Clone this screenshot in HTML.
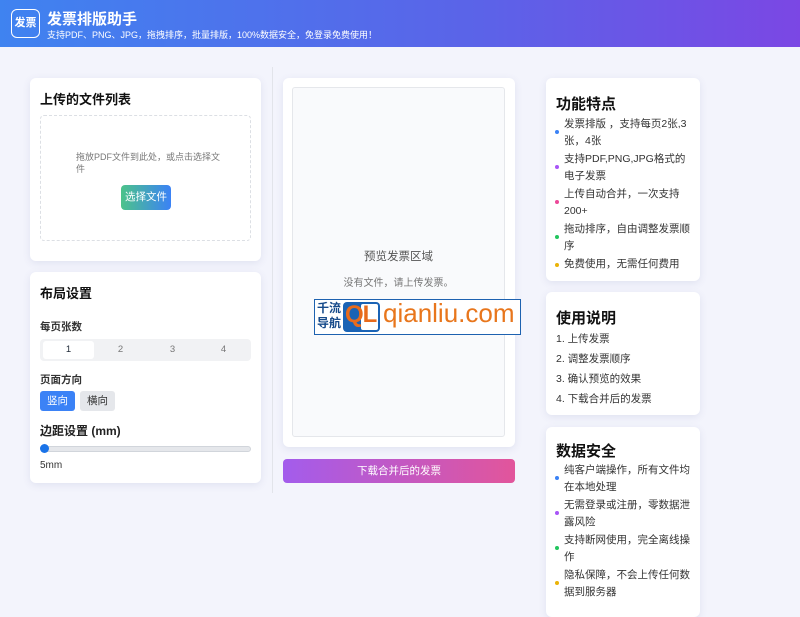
<!DOCTYPE html>
<html><head><meta charset="utf-8"><style>
*{margin:0;padding:0;box-sizing:border-box}
body{width:800px;height:599px;overflow:hidden;background:#f3f4fc;font-family:"Liberation Sans","Noto Sans CJK SC",sans-serif;color:#1f2937;position:relative}
.a{position:absolute}
.hdr{left:0;top:0;width:800px;height:47px;background:linear-gradient(90deg,#3f83f0,#5b63e8 60%,#7b47e4)}
.card{background:#fff;border-radius:6px;box-shadow:0 2px 8px rgba(90,100,160,.12)}
h3{font-size:13px;font-weight:bold;color:#111}
.li{position:absolute;left:18px;font-size:10.5px;line-height:17px;color:#333;width:128px}
.dot{position:absolute;left:-9px;width:4px;height:4px;border-radius:50%}
</style></head><body>
<div class="a hdr"></div>
<div class="a" style="left:11px;top:9px;width:29px;height:29px;border:1.5px solid #fff;border-radius:6px;color:#fff;font-size:11px;font-weight:bold;line-height:26px;text-align:center">发票</div>
<div class="a" style="left:47px;top:8px;color:#fff;font-size:15px;font-weight:bold">发票排版助手</div>
<div class="a" style="left:47px;top:28px;color:#fff;font-size:9px">支持PDF、PNG、JPG，拖拽排序，批量排版，100%数据安全，免登录免费使用！</div>

<div class="a card" style="left:30px;top:78px;width:231px;height:183px"></div>
<h3 class="a" style="left:40px;top:89px">上传的文件列表</h3>
<div class="a" style="left:40px;top:115px;width:211px;height:126px;border:1.5px dashed #dcdfe4;border-radius:4px"></div>
<div class="a" style="left:76px;top:151px;width:150px;font-size:9px;color:#777;line-height:12px">拖放PDF文件到此处，或点击选择文件</div>
<div class="a" style="left:121px;top:185px;width:50px;height:25px;border-radius:4px;background:linear-gradient(90deg,#4cc38a,#3b82f6);color:#fff;font-size:10.5px;line-height:25px;text-align:center">选择文件</div>

<div class="a card" style="left:30px;top:272px;width:231px;height:211px"></div>
<h3 class="a" style="left:40px;top:283px">布局设置</h3>
<div class="a" style="left:40px;top:319px;font-size:10.5px;font-weight:bold;color:#333">每页张数</div>
<div class="a" style="left:40px;top:339px;width:211px;height:22px;background:#f1f2f4;border-radius:4px"></div>
<div class="a" style="left:43px;top:341px;width:51px;height:18px;background:#fff;border-radius:3px"></div>
<div class="a" style="left:43px;top:344px;width:51px;text-align:center;font-size:9.5px">1</div>
<div class="a" style="left:95px;top:344px;width:51px;text-align:center;font-size:9.5px;color:#777">2</div>
<div class="a" style="left:147px;top:344px;width:51px;text-align:center;font-size:9.5px;color:#777">3</div>
<div class="a" style="left:198px;top:344px;width:51px;text-align:center;font-size:9.5px;color:#777">4</div>
<div class="a" style="left:40px;top:372px;font-size:10.5px;font-weight:bold;color:#333">页面方向</div>
<div class="a" style="left:40px;top:391px;width:35px;height:20px;background:#3b82f6;border-radius:3px;color:#fff;font-size:10.5px;line-height:20px;text-align:center">竖向</div>
<div class="a" style="left:80px;top:391px;width:35px;height:20px;background:#e5e7eb;border-radius:3px;color:#333;font-size:10.5px;line-height:20px;text-align:center">横向</div>
<div class="a" style="left:40px;top:422px;font-size:12px;font-weight:bold;color:#222">边距设置 (mm)</div>
<div class="a" style="left:41px;top:446px;width:210px;height:6px;background:#e5e7eb;border:1px solid #d1d5db;border-radius:3px"></div>
<div class="a" style="left:40px;top:444px;width:9px;height:9px;background:#1a73e8;border-radius:50%"></div>
<div class="a" style="left:40px;top:460px;font-size:10px;color:#333">5mm</div>

<div class="a" style="left:272px;top:67px;width:1px;height:426px;background:#e2e4ea"></div>

<div class="a card" style="left:283px;top:78px;width:232px;height:369px"></div>
<div class="a" style="left:292px;top:87px;width:213px;height:350px;background:#f9fafc;border:1px solid #e5e7eb;border-radius:3px"></div>
<div class="a" style="left:292px;top:248px;width:213px;text-align:center;font-size:11.5px;color:#555">预览发票区域</div>
<div class="a" style="left:292px;top:274px;width:213px;text-align:center;font-size:10px;color:#777">没有文件，请上传发票。</div>
<div class="a" style="left:314px;top:299px;width:207px;height:36px;background:#fff;border:1.5px solid #1e62b0"></div>
<div class="a" style="left:317px;top:301px;font-size:12px;line-height:15px;color:#164a8a;font-weight:bold">千流<br>导航</div>
<div class="a" style="left:343px;top:302px;width:37px;height:30px;background:#1a63b5;border-radius:4px"></div>
<div class="a" style="left:361px;top:304px;width:17px;height:26px;background:#fff;border-radius:2px"></div>
<div class="a" style="left:345px;top:301px;font-size:24px;font-weight:bold;color:#e86b1c;letter-spacing:-1px">QL</div>
<div class="a" style="left:383px;top:298px;font-size:26px;color:#e8761c">qianliu.com</div>
<div class="a" style="left:283px;top:459px;width:232px;height:24px;border-radius:4px;background:linear-gradient(90deg,#a35cec,#e2559b);color:#fff;font-size:10.5px;line-height:24px;text-align:center">下载合并后的发票</div>

<div class="a card" style="left:546px;top:78px;width:154px;height:203px">
<h3 class="a" style="left:10px;top:15px;font-size:15px">功能特点</h3>
<div class="li" style="top:38px"><i class="dot" style="top:14px;background:#3b82f6"></i>发票排版 ，支持每页2张,3张，4张</div>
<div class="li" style="top:73px"><i class="dot" style="top:14px;background:#a855f7"></i>支持PDF,PNG,JPG格式的电子发票</div>
<div class="li" style="top:108px"><i class="dot" style="top:14px;background:#ec4899"></i>上传自动合并，一次支持200+</div>
<div class="li" style="top:143px"><i class="dot" style="top:14px;background:#22c55e"></i>拖动排序，自由调整发票顺序</div>
<div class="li" style="top:178px"><i class="dot" style="top:7px;background:#eab308"></i>免费使用，无需任何费用</div>
</div>

<div class="a card" style="left:546px;top:292px;width:154px;height:123px">
<h3 class="a" style="left:10px;top:15px;font-size:15px">使用说明</h3>
<div class="a" style="left:10px;top:37px;font-size:10.5px;line-height:20px;color:#333">1. 上传发票<br>2. 调整发票顺序<br>3. 确认预览的效果<br>4. 下载合并后的发票</div>
</div>

<div class="a card" style="left:546px;top:427px;width:154px;height:190px">
<h3 class="a" style="left:10px;top:13px;font-size:15px">数据安全</h3>
<div class="li" style="top:35px"><i class="dot" style="top:14px;background:#3b82f6"></i>纯客户端操作，所有文件均在本地处理</div>
<div class="li" style="top:70px"><i class="dot" style="top:14px;background:#a855f7"></i>无需登录或注册，零数据泄露风险</div>
<div class="li" style="top:105px"><i class="dot" style="top:14px;background:#22c55e"></i>支持断网使用，完全离线操作</div>
<div class="li" style="top:140px"><i class="dot" style="top:14px;background:#eab308"></i>隐私保障，不会上传任何数据到服务器</div>
</div>
</body></html>
